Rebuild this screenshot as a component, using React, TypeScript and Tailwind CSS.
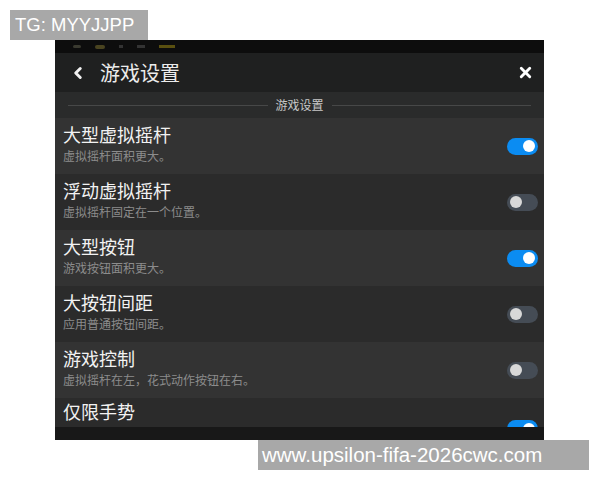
import { ChevronLeft, X } from "lucide-react"

interface Setting {
  title: string
  desc: string
  on: boolean
}

const SETTINGS: Setting[] = [
  { title: "大型虚拟摇杆", desc: "虚拟摇杆面积更大。", on: true },
  { title: "浮动虚拟摇杆", desc: "虚拟摇杆固定在一个位置。", on: false },
  { title: "大型按钮", desc: "游戏按钮面积更大。", on: true },
  { title: "大按钮间距", desc: "应用普通按钮间距。", on: false },
  { title: "游戏控制", desc: "虚拟摇杆在左，花式动作按钮在右。", on: false },
  { title: "仅限手势", desc: "", on: true },
]

const Toggle = ({ on }: { on: boolean }) => (
  <div
    className={`w-[31px] h-[17px] rounded-full flex items-center px-[3px] shrink-0 ${
      on ? "bg-[#0b8cf2] justify-end" : "bg-[#454c55] justify-start"
    }`}
  >
    <div className={`w-[12px] h-[12px] rounded-full ${on ? "bg-white" : "bg-[#d8d8d8]"}`} />
  </div>
)

export default function App() {
  return (
    <div
      className="w-[600px] h-[480px] bg-white pt-[10px] overflow-hidden"
      style={{ fontFamily: '"Noto Sans CJK SC", "Noto Sans", sans-serif' }}
    >
      <div
        className="ml-[10px] w-[138px] h-[30px] bg-[#a8a8a8] text-white text-[18.5px] leading-[30px] pl-[5px]"
        style={{ fontFamily: '"Liberation Sans", Arial, sans-serif' }}
      >
        TG: MYYJJPP
      </div>

      <div className="ml-[55px] w-[489px] h-[400px] bg-[#101010] flex flex-col overflow-hidden">
        {/* status bar */}
        <div className="h-[13px] shrink-0 bg-[#0d0d0d] flex items-center gap-[14px] pl-[18px]">
          <div className="w-[8px] h-[3px] bg-[#3a3a30] rounded-sm" />
          <div className="w-[10px] h-[4px] bg-[#4a4420] rounded-sm" />
          <div className="w-[4px] h-[3px] bg-[#333]" />
          <div className="w-[8px] h-[3px] bg-[#333]" />
          <div className="w-[16px] h-[3px] bg-[#5a5010]" />
        </div>

        {/* header */}
        <div className="h-[39px] shrink-0 bg-[#1f2020] flex items-center pl-[14px] pr-[10px]">
          <ChevronLeft className="w-[18px] h-[18px] text-[#f0f0f0]" strokeWidth={4} />
          <span className="ml-[13px] text-[20px] text-[#ececec] leading-none">游戏设置</span>
          <X className="ml-auto w-[17px] h-[17px] text-white" strokeWidth={4} />
        </div>

        {/* section label */}
        <div className="h-[26px] shrink-0 bg-[#2a2b2b] flex items-center px-[13px] gap-[8px]">
          <div className="flex-1 h-px bg-[#474848]" />
          <span className="text-[12px] text-[#c8c8c8] leading-none">游戏设置</span>
          <div className="flex-1 h-px bg-[#474848]" />
        </div>

        {SETTINGS.map((s, i) => {
          const last = i === SETTINGS.length - 1
          return (
            <div
              key={s.title}
              className={`shrink-0 flex justify-between pl-[8px] pr-[6px] ${
                last ? "h-[29px] items-start" : "h-[56px] items-center"
              } ${i % 2 === 0 ? "bg-[#333333]" : "bg-[#2b2b2b]"}`}
            >
              <div className={`flex flex-col ${last ? "pt-[2px]" : "self-start pt-[5px]"}`}>
                <span className="text-[18px] leading-[22px] text-[#f2f2f2]">{s.title}</span>
                {s.desc && (
                  <span className="mt-[3px] text-[12px] leading-[16px] text-[#8c8c8c]">{s.desc}</span>
                )}
              </div>
              <div className={last ? "pt-[22px]" : ""}>
                <Toggle on={s.on} />
              </div>
            </div>
          )
        })}

        <div className="flex-1 bg-[#181818]" />
      </div>

      <div
        className="ml-[258px] w-[331px] h-[30px] bg-[#a8a8a8] text-white text-[20.5px] leading-[30px] pl-[4px]"
        style={{ fontFamily: '"Liberation Sans", Arial, sans-serif' }}
      >
        www.upsilon-fifa-2026cwc.com
      </div>
    </div>
  )
}
